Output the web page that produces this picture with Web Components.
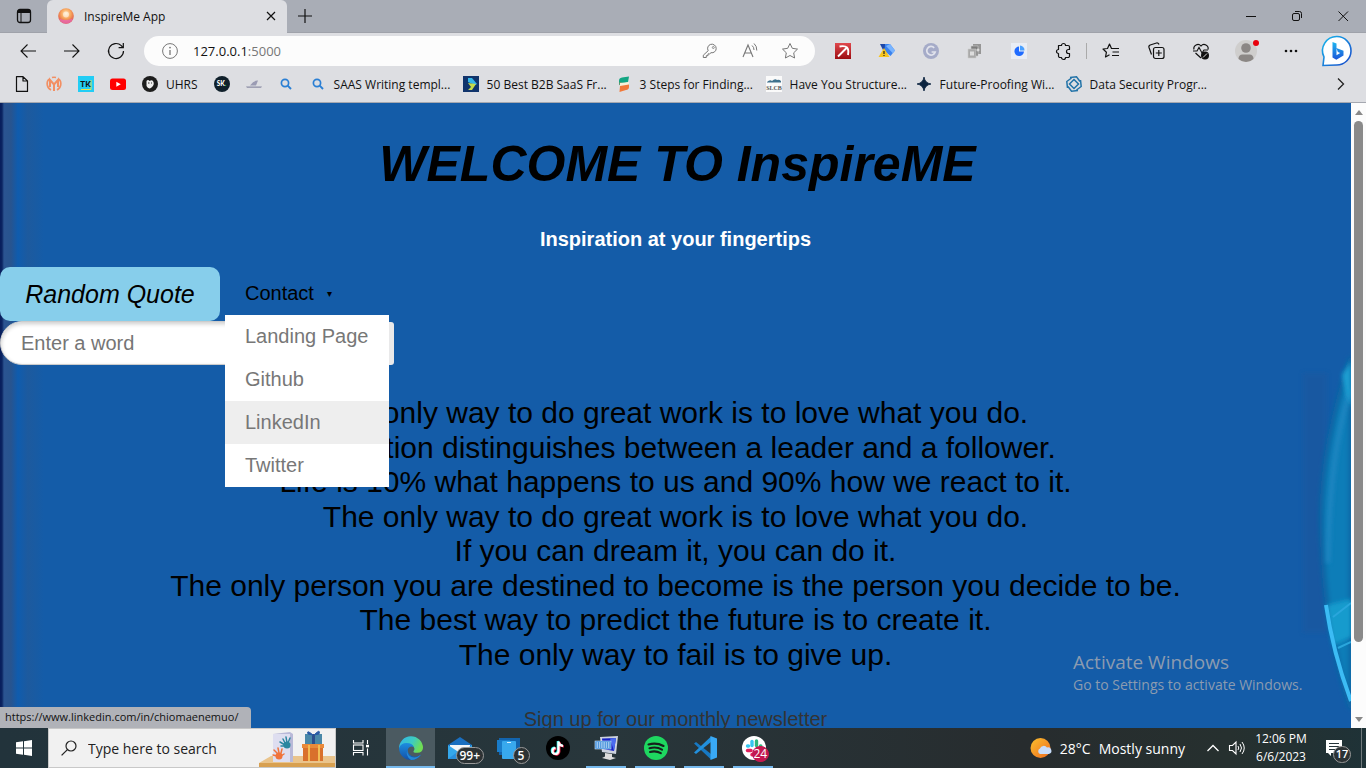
<!DOCTYPE html>
<html lang="en">
<head>
<meta charset="utf-8">
<title>InspireMe App</title>
<style>
html,body{height:100%;margin:0}
body{display:flex;flex-direction:column;overflow:hidden;font-family:"Open Sans","Noto Sans",sans-serif;font-size:12px;color:#111}
</style>
</head>
<body>
<tab-strip></tab-strip>
<browser-toolbar></browser-toolbar>
<bookmarks-bar></bookmarks-bar>
<browser-view>
  <inspire-page></inspire-page>
</browser-view>
<task-bar></task-bar>

<script>
const ICONS = {
  workspace:[16,`<rect x="1.5" y="1.5" width="13" height="13" rx="2.5" fill="none" stroke="#111" stroke-width="1.3"/><path d="M1.5 5V3.5a2 2 0 0 1 2-2h9a2 2 0 0 1 2 2V5z" fill="#111"/><path d="M5 5v9.5" stroke="#111"/>`],
  orb:[16,`<defs><radialGradient id="g" cx=".5" cy=".35" r=".7"><stop offset="0" stop-color="#ffe9b8"/><stop offset=".45" stop-color="#f7a45b"/><stop offset="1" stop-color="#d6403f"/></radialGradient></defs><circle cx="8" cy="8" r="7.8" fill="url(#g)"/><path d="M1 10.500a7.400 7.400 0 0 0 14 0q-7 3-14 0z" fill="#e86ab8" opacity=".75"/><circle cx="8" cy="6.500" r="3" fill="#fff" opacity=".5"/>`],
  close:[16,`<path d="M4 4l8 8M12 4l-8 8" stroke="#111" stroke-width="1.2"/>`],
  plus:[16,`<path d="M8 1v14M1 8h14" stroke="#111" stroke-width="1.2"/>`],
  min:[16,`<path d="M3 8.5h10" stroke="#111"/>`],
  restore:[16,`<rect x="3.500" y="5.500" width="7" height="7" rx="1.500" fill="none" stroke="#111"/><path d="M6 3.500h4.500a2 2 0 0 1 2 2V10" fill="none" stroke="#111"/>`],
  winclose:[16,`<path d="M3.500 3.500l9.500 9.500M13 3.500L3.500 13" stroke="#111"/>`],
  back:[16,`<path d="M16 8H1M7.500 1.500L1 8l6.500 6.500" fill="none" stroke="#111" stroke-width="1.100"/>`],
  forward:[16,`<path d="M0 8h15M8.500 1.500L15 8l-6.500 6.500" fill="none" stroke="#111" stroke-width="1.100"/>`],
  refresh:[18,`<path d="M16.500 9a7.500 7.500 0 1 1-2.200-5.300L16 5.500" fill="none" stroke="#111" stroke-width="1.200"/><path d="M16.300 1v4.700h-4.700" fill="none" stroke="#111" stroke-width="1.200"/>`],
  info:[16,`<circle cx="8" cy="8" r="7.400" fill="none" stroke="#777"/><path d="M8 7v5" stroke="#777" stroke-width="1.300"/><circle cx="8" cy="4.600" r=".9" fill="#777"/>`],
  key:[16,`<path d="M6.200 8.200A4.300 4.300 0 1 1 9 10.200L7.700 11.400H6v1.800H4.300V15H1.300v-2.300z" transform="translate(0 -.5)" fill="none" stroke="#777"/><circle cx="11.300" cy="4.500" r="1" fill="none" stroke="#777" stroke-width=".8"/>`],
  read:[18,`<path d="M2 15L7 3l5 12M3.600 11h6.800" fill="none" stroke="#777" stroke-width="1.100"/><path d="M11 3.500q2 1.500 2 4.500M13 1.500q3 2.500 2.800 7" fill="none" stroke="#777"/>`],
  star:[18,`<path d="M9 1.500l2.300 4.800 5.200.8-3.800 3.700.9 5.200L9 13.500 4.400 16l.9-5.200L1.500 7.100l5.200-.8z" fill="none" stroke="#777" stroke-linejoin="round"/>`],
  pick:[16,`<defs><linearGradient id="g" x2="0" y2="1"><stop stop-color="#e0484d"/><stop offset="1" stop-color="#9c0d12"/></linearGradient></defs><rect width="16" height="16" fill="url(#g)"/><path d="M3 13.500L11.500 5M4.500 3.500q5.500-1 7.500 1t1 7.500" fill="none" stroke="#fff" stroke-width="1.900"/>`],
  filter:[18,`<path d="M2 2h10l-6 8z" fill="#1d47a8"/><path d="M7 2h5l5 6.500-4.500 5.500-6-5z" fill="#3b83ee"/><path d="M12 2l5 6.500-2.200 2.700L8 4z" fill="#79b4ff"/><path d="M6 6l5.500 9H.5z" fill="#f7c51e"/><path d="M6 9v3M6 13v1" stroke="#222" stroke-width="1.200"/>`],
  gram:[16,`<circle cx="8" cy="8" r="8" fill="#a5abc8"/><path d="M11.200 4.800A4.300 4.300 0 1 0 12.200 9H8.600" fill="none" stroke="#e1e3ec" stroke-width="1.700"/>`],
  copies:[16,`<path d="M6 1h8v10H6z" fill="#969696"/><path d="M4 3h7v10H4z" fill="#7d7d7d" stroke="#ccc" stroke-width=".6"/><path d="M1 6h8v9H1z" fill="#a9a9a9" stroke="#ccc" stroke-width=".6"/><path d="M3 8.500h4v4H3z" fill="#ddd"/><path d="M9.500 7h3M11 5.500v3" stroke="#eee"/>`],
  pie:[16,`<rect width="16" height="16" fill="#e9edf5"/><path d="M8 3.500A4.800 4.800 0 1 0 13 8.500H8z" fill="#1f6bff"/><path d="M9 2.500v5h4.500A4.800 4.800 0 0 0 9 2.500z" fill="#4aa0ff"/>`],
  puzzle:[18,`<path d="M4.500 3.500h3a2 2 0 1 1 4 0h2.500a1.500 1.500 0 0 1 1.500 1.500v2.500h-1a1.800 1.800 0 0 0 0 4h1V14a1.500 1.500 0 0 1-1.500 1.500h-2.500a2 2 0 0 1-4 0H6A1.500 1.500 0 0 1 4.500 14v-2.500a2 2 0 1 1 0-4z" fill="none" stroke="#111" stroke-width="1.200" stroke-linejoin="round"/>`],
  favs:[18,`<path d="M9.500 6.500L7.500 2 5.500 6.500 1 7l3.400 3.300-.9 4.700L7.500 12.700M7.500 2l2 4.500h7.500M10.500 10H17M10 13.500h7" fill="none" stroke="#111" stroke-width="1.200" stroke-linejoin="round"/>`],
  collect:[18,`<rect x="6.500" y="5.500" width="10.500" height="11" rx="2" fill="none" stroke="#111" stroke-width="1.200"/><path d="M11.800 8v6M8.800 11h6" stroke="#111" stroke-width="1.200"/><path d="M4.500 12.500L2 5.500A2 2 0 0 1 3.200 3l6.300-2a2 2 0 0 1 2.500 1.500" fill="none" stroke="#111" stroke-width="1.200"/>`],
  heart:[18,`<path d="M2 7.500A4 4 0 0 1 9 4a4 4 0 0 1 7 3.500M3.500 11L9 16" fill="none" stroke="#111" stroke-width="1.200"/><path d="M1 9h4l2-3.500 3 5.500 2-3h4" fill="none" stroke="#111" stroke-width="1.100"/><circle cx="13" cy="13.500" r="4" fill="#111"/><path d="M11 15.500l4-4" stroke="#ddd"/>`],
  person:[22,`<circle cx="11" cy="11" r="11" fill="#cfcecd"/><circle cx="11" cy="8" r="4.800" fill="#8b8785"/><path d="M3.500 19q0-4.500 4-4.500h7q4 0 4 4.500a11 11 0 0 1-15 0z" fill="#8b8785"/>`],
  dots:[16,`<circle cx="3" cy="8" r="1.300" fill="#111"/><circle cx="8" cy="8" r="1.300" fill="#111"/><circle cx="13" cy="8" r="1.300" fill="#111"/>`],
  bing:[32,`<defs><linearGradient id="g" x2="1" y2="1"><stop stop-color="#18b8ec"/><stop offset="1" stop-color="#1b49c9"/></linearGradient><linearGradient id="h" x2="0" y2="1"><stop stop-color="#1fb6f0"/><stop offset="1" stop-color="#1c55d8"/></linearGradient></defs><path d="M16 1.500A14.200 14.200 0 1 1 15.500 30L2 30.500 3 22A14.200 14.200 0 0 1 16 1.500z" fill="#fff" stroke="url(#g)" stroke-width="1.600"/><path d="M11.500 7l4 1.500v11.700l3.700-2.100-2.300-1.200-1.600-3.800 7.200 2.600v4.700l-7.200 4.400-3.800-2.300z" fill="url(#h)"/>`],
  page:[16,`<path d="M3 .6h6.500L14 5v10.400H3zM9.500.6V5H14" transform="translate(-.5 0)" fill="none" stroke="#111" stroke-width="1.200" stroke-linejoin="round"/>`],
  monday:[16,`<path d="M5 14A7 7 0 0 1 3 3M6 1.500a7 7 0 0 1 4 0M13 3a7 7 0 0 1-2 11" fill="none" stroke="#f28f63" stroke-width="1.600"/><path d="M4 11V4l4 4.500L12 4v7M8 8.500V15" fill="none" stroke="#f28f63" stroke-width="2"/>`],
  tk:[16,`<rect width="16" height="16" fill="#22cdf5"/><path d="M3 13.500h10V4" fill="none" stroke="#e8e24a"/><text x="7.500" y="10.500" text-anchor="middle" font-family="Lato,sans-serif" font-weight="900" font-size="8" fill="#111">TK</text>`],
  yt:[16,`<rect y="2.500" width="16" height="11.500" rx="2.500" fill="#f00"/><path d="M6.300 5.700l4.500 2.500-4.500 2.500z" fill="#fff"/>`],
  uhrs:[16,`<circle cx="8" cy="8" r="8" fill="#1d1d1d"/><path d="M4.500 5q1.500-2 3 0 3-2 4 1t-2 5.500-5-1.500z" fill="#eee"/><path d="M6 7h1.500M9 7h1" stroke="#333"/>`],
  sk:[16,`<circle cx="8" cy="8" r="8" fill="#10202b"/><text x="7.600" y="10.300" text-anchor="middle" font-family="Lato,sans-serif" font-weight="900" font-size="6.500" fill="#fff">SK<tspan fill="#2bd576">.</tspan></text>`],
  ship:[16,`<path d="M0 10.500h16l-1 1.200H1z" fill="#8a8ba3"/><path d="M4 9.500Q8 4 12 4.500L10 9.500z" fill="#9a9bb3"/>`],
  search:[16,`<circle cx="7" cy="7" r="3.600" fill="none" stroke="#2a7fd4" stroke-width="1.700"/><path d="M9.700 9.700L13 13" stroke="#2a7fd4" stroke-width="1.900"/>`],
  b2b:[16,`<rect width="16" height="16" fill="#10346c"/><path d="M5 2h4l5 6-2 1-7-3z" fill="#35b6e8"/><path d="M5 7l8 1-4 6H5l3-3z" fill="#c5dc4b"/>`],
  steps:[16,`<path d="M13 .5L12 6 3 9V4.500Q3 2 6 1.500z" fill="#12a583"/><path d="M3.500 6.500L13 8v3q0 2.500-3 3l-6.500 2L4 10z" fill="#f2793a"/><path d="M4 7l9-1v2.500L4 10z" fill="#f8f1d9"/>`],
  slcb:[16,`<rect width="16" height="16" fill="#fafafa"/><path d="M1 6q3-3 5-1 3-3 5-1 2-1 4 1v1.500H1z" fill="#3f718d"/><text x="8" y="14" text-anchor="middle" font-family="Liberation Serif,serif" font-weight="700" font-size="6" fill="#555">SLCB</text>`],
  spark:[16,`<path d="M8 1Q9 7 15 8 9 9 8 15 7 9 1 8 7 7 8 1z" fill="#0c2440" stroke="#0c2440" stroke-width=".8"/>`],
  knot:[16,`<g fill="none" stroke="#2273a8" stroke-width="1.500"><path d="M4 1.500L10.500.800 14 5.500"/><path d="M4 1.500L10.500.800 14 5.500" transform="rotate(90 8 8)"/><path d="M4 1.500L10.500.800 14 5.500" transform="rotate(180 8 8)"/><path d="M4 1.500L10.500.800 14 5.500" transform="rotate(270 8 8)"/><path d="M8 3.500L12.500 8 8 12.500 3.500 8z"/></g>`],
  chevron:[16,`<path d="M5 2.500L10.500 8 5 13.500" fill="none" stroke="#222" stroke-width="1.300"/>`],
  windows:[16,`<path d="M0 2.300L7 1.300v6.200H0zM8 1.200L16 0v7.500H8zM0 8.500h7v6.200l-7-1zM8 8.500h8V16l-8-1.200z" fill="#fff"/>`],
  glass:[16,`<circle cx="10" cy="6" r="5" fill="none" stroke="#222" stroke-width="1.200"/><path d="M6.400 9.600L.6 15.400" stroke="#222" stroke-width="1.300"/>`],
  taskview:[18,`<path d="M1.500 1v3h9.500V1M1.500 16.500v-3h9.500v3" fill="none" stroke="#fff" stroke-width="1.100"/><rect x="1.500" y="6" width="9.500" height="5.500" fill="none" stroke="#fff" stroke-width="1.100"/><path d="M15.500 1v4M15.500 9.500v7" stroke="#fff" stroke-width="1.100"/><rect x="14" y="5.800" width="3" height="2.500" fill="#fff"/>`],
  edge:[24,`<defs><linearGradient id="g" y2=".4"><stop stop-color="#2fb4ee"/><stop offset=".6" stop-color="#3ecbbf"/><stop offset="1" stop-color="#6fdd54"/></linearGradient><linearGradient id="h" x2="0" y2="1"><stop stop-color="#1c8ee0"/><stop offset="1" stop-color="#1450a8"/></linearGradient></defs><path d="M0 12.500A12 12 0 0 1 24 12q-.5 4.500-5.500 4.800-4.500.2-4-1.600Q17 12 13 9.500 6 6 0 12.500z" fill="url(#g)"/><path d="M0 12Q2 7 7.500 7q6 0 7.300 4-3.300-1.500-5.300 1-2 3 1 6.500 4 4 11.500.5A12 12 0 0 1 12 24 12 12 0 0 1 0 12z" fill="url(#h)"/><path d="M8.500 13.500q-1 5.500 4 7.500 5 1.500 9.500-2.500A12 12 0 0 1 12 24Q6 20 8.500 13.500z" fill="#2488d6"/>`],
  mail:[24,`<path d="M0 9L12 1l12 8v14H0z" fill="#1a6fc0"/><path d="M2 9h20v10H2z" fill="#f3f6f8"/><path d="M0 9l12 8 12-8v14H0z" fill="#35a8ec"/><path d="M0 23L12 14l12 9z" fill="#2a90de"/>`],
  phone:[24,`<rect x="2" y="2" width="21" height="17" fill="#1264ae"/><rect y="4" width="13" height="12" fill="#197cca"/><rect x="5" y="5" width="14" height="18" rx="1" fill="#38a9ee"/><path d="M10 6.500h4" stroke="#d7efff"/>`],
  tiktok:[24,`<circle cx="12" cy="12" r="12" fill="#000"/><g fill="none" stroke-width="2.200"><path d="M12.500 5.500v9.500a3 3 0 1 1-3-3M12.500 5.500q.5 4 4.500 4.300" stroke="#25f4ee" transform="translate(-.7 -.5)"/><path d="M12.500 5.500v9.500a3 3 0 1 1-3-3M12.500 5.500q.5 4 4.500 4.300" stroke="#fe2c55" transform="translate(.8 .6)"/><path d="M12.500 5.500v9.500a3 3 0 1 1-3-3M12.500 5.500q.5 4 4.500 4.300" stroke="#fff"/></g>`],
  pc:[24,`<path d="M5 1l18-1-2 18-14-2z" fill="#ccd2de"/><path d="M7 2.500l14-.5-2 13-11-2z" fill="#1722c4"/><path d="M15 2.500l6-.5-2 13z" fill="#4a6bef"/><rect x="0" y="5" width="16" height="8" fill="#3a8bda" stroke="#cfe6fa" stroke-width=".6"/><path d="M1.500 7h13M1.500 9h13M1.500 11h13" stroke="#fff" stroke-width="1.100" stroke-dasharray="1.500 .8"/><path d="M10 17l7 1v3l4 1-6 2-8-2 3-1.500z" fill="#dcdcdc"/>`],
  spotify:[24,`<circle cx="12" cy="12" r="12" fill="#1ed760"/><path d="M4.500 8.500q8-2.300 15 1.500M5.500 12.300q7-2 12.500 1.400M6 16q6-1.600 10.800 1.200" fill="none" stroke="#16201c" stroke-width="2.100" stroke-linecap="round"/>`],
  vscode:[24,`<path d="M1 7.500L3 6l15 12v5.500z" fill="#1779c4"/><path d="M1 16.500L3 18 18 6V.5z" fill="#2290dd"/><path d="M17.500 0L24 2.500v19L17.500 24z" fill="#39a9f5"/>`],
  slack:[24,`<circle cx="12" cy="12" r="12" fill="#fff"/><g stroke-width="3.400" stroke-linecap="round"><path d="M10 5.500v4" stroke="#36c5f0"/><path d="M5.500 10h1" stroke="#36c5f0"/><path d="M14.500 5v4.500" stroke="#2eb67d"/><path d="M18.500 10h.3" stroke="#2eb67d"/><path d="M5.500 14.500H9" stroke="#e01e5a"/><path d="M10 18.500v.3" stroke="#e01e5a"/><path d="M15 14.500h4" stroke="#ecb22e"/></g>`],
  sun:[22,`<defs><linearGradient id="g" x2="1" y2="1"><stop stop-color="#fbc02e"/><stop offset="1" stop-color="#ee6b1f"/></linearGradient></defs><circle cx="10.500" cy="11" r="10" fill="url(#g)"/><path d="M10 17a3 3 0 0 1 0-5.500A4 4 0 0 1 17 10.500a3.300 3.300 0 0 1 2 6.500z" fill="#c8dcfa"/>`],
  up:[14,`<path d="M1.500 10L7 4.500l5.500 5.500" fill="none" stroke="#fff" stroke-width="1.300"/>`],
  speaker:[18,`<path d="M1.500 6.500h3L8 3v12L4.500 11.500h-3z" fill="none" stroke="#fff" stroke-width="1.100"/><path d="M10 7q1.500 2 0 4M12 5q3 4 0 8M14 3q4.500 6 0 12" fill="none" stroke="#fff"/>`],
  notes:[18,`<path d="M1 1h16v13H6v3l-3-3H1z" fill="#fff"/><path d="M4 4.500h10M4 7.500h10M4 10.500h7" stroke="#26343a" stroke-width="1.200"/>`]
};

class UiIcon extends HTMLElement{
  static observedAttributes=['name'];
  constructor(){super();this.attachShadow({mode:'open'});}
  attributeChangedCallback(){
    const [box,art]=ICONS[this.getAttribute('name')];
    this.shadowRoot.innerHTML=`<style>:host{display:inline-flex;flex:none}svg{display:block;overflow:visible}</style><svg width="${box}" height="${box}" viewBox="0 0 ${box} ${box}" aria-hidden="true">${art}</svg>`;
  }
}
customElements.define('ui-icon',UiIcon);

const RESET=`*,:host{box-sizing:border-box}button,input{font:inherit;color:inherit;border:0;background:none;padding:0;margin:0}a{color:inherit;text-decoration:none}`;
function define(name,html,setup){
  const t=document.createElement('template');
  t.innerHTML=html;
  customElements.define(name,class extends HTMLElement{
    constructor(){super();this.attachShadow({mode:'open'}).append(t.content.cloneNode(true));}
    connectedCallback(){if(setup)setup(this);}
  });
}

/* Square button that holds one icon */
define('icon-button',`<style>${RESET}:host{display:flex;flex:none;width:44px;align-items:center;justify-content:center}button{display:flex;position:relative}</style><button><slot></slot></button>`,
  el=>el.shadowRoot.querySelector('button').setAttribute('aria-label',el.getAttribute('label')));

define('tab-strip',`<style>${RESET}
:host{display:flex;flex:none;height:33px;background:#a9adb6;border-bottom:1px solid #9fa2aa}
icon-button{width:47px}
.tab{display:flex;align-items:center;gap:10px;width:240px;height:33px;padding:0 0 1px 11px;background:#dddee2;border-radius:6px 6px 0 0}
.tab span{flex:1}
.tab icon-button{width:32px}
.new{width:36px}.gap{flex:1}.win{width:46px}
</style>
<icon-button label="Workspaces"><ui-icon name="workspace"></ui-icon></icon-button>
<div class="tab"><ui-icon name="orb"></ui-icon><span>InspireMe App</span><icon-button label="Close tab"><ui-icon name="close"></ui-icon></icon-button></div>
<icon-button class="new" label="New tab"><ui-icon name="plus"></ui-icon></icon-button>
<div class="gap"></div>
<icon-button class="win" label="Minimise"><ui-icon name="min"></ui-icon></icon-button>
<icon-button class="win" label="Restore"><ui-icon name="restore"></ui-icon></icon-button>
<icon-button class="win" label="Close"><ui-icon name="winclose"></ui-icon></icon-button>`);

define('browser-toolbar',`<style>${RESET}
:host{display:flex;flex:none;height:36px;padding:0 5px 0 6px;background:#dddee2}
.address{display:flex;flex:1;align-items:center;height:30px;margin:3px 6px;border-radius:15px;background:#fcfcfc;padding:0 5px 0 18px;gap:15px}
.url{flex:1;display:flex;font-size:13px;color:#777}
.url b{font-weight:400;color:#111}
.tools{display:flex}.tools icon-button{width:40px}
.app{width:45px}.bing{width:48px}
.rule{width:1px;height:16px;margin:10px 1px;background:#aaa}
.dot{position:absolute;right:-2px;top:0;width:6px;height:6px;border-radius:3px;background:#e8000c}
</style>
<icon-button label="Back"><ui-icon name="back"></ui-icon></icon-button>
<icon-button label="Forward"><ui-icon name="forward"></ui-icon></icon-button>
<icon-button label="Refresh"><ui-icon name="refresh"></ui-icon></icon-button>
<div class="address"><ui-icon name="info"></ui-icon><div class="url"><b>127.0.0.1</b>:5000</div>
<div class="tools"><icon-button label="Passwords"><ui-icon name="key"></ui-icon></icon-button><icon-button label="Read aloud"><ui-icon name="read"></ui-icon></icon-button><icon-button label="Favourite"><ui-icon name="star"></ui-icon></icon-button></div></div>
<icon-button label="Pickaxe"><ui-icon name="pick"></ui-icon></icon-button>
<icon-button label="Filter"><ui-icon name="filter"></ui-icon></icon-button>
<icon-button label="Grammar"><ui-icon name="gram"></ui-icon></icon-button>
<icon-button label="Copies"><ui-icon name="copies"></ui-icon></icon-button>
<icon-button label="Similar sites"><ui-icon name="pie"></ui-icon></icon-button>
<icon-button label="Extensions"><ui-icon name="puzzle"></ui-icon></icon-button>
<div class="rule"></div>
<icon-button class="app" label="Favourites"><ui-icon name="favs"></ui-icon></icon-button>
<icon-button class="app" label="Collections"><ui-icon name="collect"></ui-icon></icon-button>
<icon-button class="app" label="Essentials"><ui-icon name="heart"></ui-icon></icon-button>
<icon-button class="app" label="Profile"><ui-icon name="person"></ui-icon><span class="dot"></span></icon-button>
<icon-button class="app" label="More"><ui-icon name="dots"></ui-icon></icon-button>
<icon-button class="bing" label="Bing"><ui-icon name="bing"></ui-icon></icon-button>`);

define('bookmark-item',`<style>${RESET}
:host{display:flex;flex:none}
a{display:flex;align-items:center;gap:8px;padding:0 8px;white-space:nowrap}
</style><a href="#"><ui-icon></ui-icon><slot></slot></a>`,
el=>{
  el.shadowRoot.querySelector('ui-icon').setAttribute('name',el.getAttribute('icon'));
  if(el.hasAttribute('label'))el.shadowRoot.querySelector('a').setAttribute('aria-label',el.getAttribute('label'));
});

define('bookmarks-bar',`<style>${RESET}
:host{display:flex;flex:none;height:34px;padding:0 3px 3px 6px;background:#dddee2;border-bottom:1px solid #a5a8b0}
.page{width:150px}
.wide{width:153px}
.gap{flex:1}
</style>
<bookmark-item icon="page" label="Page"></bookmark-item><bookmark-item icon="monday" label="Boards"></bookmark-item><bookmark-item icon="tk" label="TK"></bookmark-item><bookmark-item icon="yt" label="YouTube"></bookmark-item><bookmark-item icon="uhrs"><span>UHRS</span></bookmark-item><bookmark-item icon="sk" label="SK"></bookmark-item><bookmark-item icon="ship" label="Ship"></bookmark-item><bookmark-item icon="search" label="Search"></bookmark-item><bookmark-item class="wide" icon="search"><span>SAAS Writing templ...</span></bookmark-item><bookmark-item class="wide" icon="b2b"><span>50 Best B2B SaaS Fr...</span></bookmark-item><bookmark-item class="page" icon="steps"><span>3 Steps for Finding...</span></bookmark-item><bookmark-item class="page" icon="slcb"><span>Have You Structure...</span></bookmark-item><bookmark-item class="page" icon="spark"><span>Future-Proofing Wi...</span></bookmark-item><bookmark-item class="page" icon="knot"><span>Data Security Progr...</span></bookmark-item>
<div class="gap"></div><icon-button label="More bookmarks"><ui-icon name="chevron"></ui-icon></icon-button>`);

define('scroll-rail',`<style>
:host{display:flex;flex-direction:column;flex:none;width:15px;background:#fcfcfc;align-items:center}
.up,.down{border:4px solid transparent;width:0;height:0}
.up{border-top:0;border-bottom:5px solid #888;margin:7px 0 6px}
.thumb{flex:520;width:9px;border-radius:5px;background:#8a8a8a}
.rest{flex:75}
.down{border-bottom:0;border-top:5px solid #888;margin-bottom:6px}
</style><i class="up"></i><i class="thumb"></i><i class="rest"></i><i class="down"></i>`);

define('browser-view',`<style>
:host{display:flex;flex:1;min-height:0;position:relative;overflow:hidden}
::slotted(*){flex:1}
.status{position:absolute;left:0;bottom:0;height:21px;line-height:20px;padding:0 13px 0 5px;background:#b0b2b8;border-radius:0 4px 0 0;font-size:11px;color:#111}
.mark{position:absolute;right:57px;bottom:33px;width:236px;color:#8b9bb0;font-size:14px;line-height:20px;white-space:nowrap}
.mark strong{display:block;font-weight:400;font-size:19px;line-height:25px}
</style><slot></slot><scroll-rail></scroll-rail>
<div class="status">https://www.linkedin.com/in/chiomaenemuo/</div>
<div class="mark"><strong>Activate Windows</strong>Go to Settings to activate Windows.</div>`);

define('contact-menu',`<style>${RESET}
:host{display:block;position:relative}
button{display:flex;align-items:center;gap:13px;height:48px;padding:4px 20px 0;font-size:20px}
button i{font:normal 10px "DejaVu Sans",sans-serif}
ul{position:absolute;z-index:2;left:0;top:48px;min-width:164px;margin:0;padding:0;list-style:none;background:#fff;color:#777;font-size:20px}
a{display:block;line-height:43px;padding:0 20px;white-space:nowrap}
.on{background:#eee}
</style>
<button aria-haspopup="true" aria-expanded="true">Contact <i>▾</i></button>
<ul><li><a href="#">Landing Page</a></li><li><a href="#">Github</a></li><li><a class="on" href="https://www.linkedin.com/in/chiomaenemuo/">LinkedIn</a></li><li><a href="#">Twitter</a></li></ul>`);

define('quote-search',`<style>${RESET}
:host{display:block}
form{display:flex;width:394px;height:44px}
input{flex:1;min-width:0;height:44px;padding:0 20px;border:1px solid #ccc;border-radius:22px 0 0 22px;background:#fff;box-shadow:inset 0 2px 4px #0003;font-size:20px}
input::placeholder{color:#757575;opacity:1}
button{width:60px;background:#e9e9ea;border-radius:0 3px 3px 0;margin-top:1px}
</style><form><input type="text" aria-label="Word" placeholder="Enter a word"><button type="button" aria-label="Search"></button></form>`);

define('inspire-page',`<style>${RESET}
:host{display:block;position:relative;overflow:hidden;min-width:0;font-family:"Liberation Sans",Arial,sans-serif;color:#000;background:linear-gradient(90deg,#071d5c 0,#0b2461 2px,#2b5491 4px,#27548f 11px,#0f5cae 18px,#1d5a9e 28px,#145ca8 44px) #145ca8}
.art{position:absolute;right:0;top:240px;width:60px;height:385px}
header{text-align:center}
h1{margin:0;padding:33px 0 0 4px;font-size:50px;line-height:57px;font-style:italic}
h2{margin:35px 0 0;font-size:20px;line-height:23px;color:#fff}
nav{display:flex;gap:5px;margin-top:16px;position:relative;z-index:1}
.random{min-width:220px;height:54px;padding:0 25px;border-radius:10px;background:#87ceeb;font-size:25px;font-style:italic}
.quotes{display:grid;grid-auto-rows:1fr;align-items:center;height:276px;margin:31px 0 0;padding:0;list-style:none;text-align:center;font-size:30px;line-height:34px}
.news{margin:36px 0 0;text-align:center;font-size:20px;line-height:23px;color:#333}
</style>
<svg class="art" viewBox="0 0 60 385" aria-hidden="true"><defs><filter id="s" x="-50%" width="200%"><feGaussianBlur stdDeviation="2"/></filter></defs>
<path d="M12 30h24v260H12z" fill="#1c579c" opacity=".5" filter="url(#s)"/>
<path d="M60 15Q28 110 31 190 34 290 60 365z" fill="#0f7db8" stroke="#0868a6" stroke-width="5" filter="url(#s)"/>
<path d="M60 45Q38 110 37 220" fill="none" stroke="#2c8cc8" stroke-width="4" opacity=".7" filter="url(#s)"/>
<path d="M60 18l-9 14 4 20 5 12z" fill="#1a9fd2" filter="url(#s)"/>
<path d="M36 262l24-6v38l-18 8z" fill="#139bcd" filter="url(#s)"/>
<path d="M35 262Q42 310 60 358" fill="none" stroke="#3cbcf5" stroke-width="4"/><path d="M42 274l18-14M47 305l13-6" stroke="#2aa6dc" stroke-width="2"/></svg>
<header><h1>WELCOME TO InspireME</h1><h2>Inspiration at your fingertips</h2></header>
<nav><button class="random">Random Quote</button><contact-menu></contact-menu></nav>
<quote-search></quote-search>
<ul class="quotes"><li>The only way to do great work is to love what you do.</li><li>Innovation distinguishes between a leader and a follower.</li><li>Life is 10% what happens to us and 90% how we react to it.</li><li>The only way to do great work is to love what you do.</li><li>If you can dream it, you can do it.</li><li>The only person you are destined to become is the person you decide to be.</li><li>The best way to predict the future is to create it.</li><li>The only way to fail is to give up.</li></ul>
<p class="news">Sign up for our monthly newsletter</p>`);

/* Taskbar button: icon, optional badge, optional underline when running */
define('task-button',`<style>${RESET}
:host{display:flex;flex:none;width:49px;justify-content:center;position:relative}
:host([running])::after{content:"";position:absolute;left:4px;right:5px;bottom:0;height:2px;background:#76b9ed}
:host([active]){background:#4b5a61}
:host([active])::after{left:0;right:0}
button{display:flex;align-items:center;position:relative}
::slotted(*){position:absolute;left:16px;top:19px;min-width:17px;height:17px;padding:0 4px;border:1px solid #999;border-radius:9px;background:#2c3234;color:#fff;font-weight:600;font-size:12px;line-height:15px}
::slotted(.wide){left:8px;padding:0 3px}
::slotted(.red){left:10px;top:18px;height:16px;min-width:16px;padding:0 1px;background:#c2184f;border-color:#c2184f;font-weight:400;line-height:14px}
</style><button><ui-icon></ui-icon><slot></slot></button>`,
el=>{
  el.shadowRoot.querySelector('ui-icon').setAttribute('name',el.getAttribute('icon'));
  el.shadowRoot.querySelector('button').setAttribute('aria-label',el.getAttribute('icon'));
});

define('task-bar',`<style>${RESET}
:host{display:flex;flex:none;height:40px;background:linear-gradient(90deg,#22333b,#28363b 45%,#272c2e 75%,#26302f 90%,#1f3237);color:#fff}
.start{width:48px}
.find{display:flex;align-items:center;gap:11px;width:288px;padding-left:12px;background:#f1f1f1;border:1px solid #c8c8c8;color:#222}
.find input{flex:1;min-width:0;font-size:14px}
.find input::placeholder{color:#222;opacity:1}
.find svg{flex:none;align-self:flex-end}
.view{width:50px}
.gap{flex:1}
.weather{display:flex;align-items:center;gap:8px;margin-right:16px;font-size:14px;white-space:nowrap}
.tray{width:24px}
time{width:64px;margin-right:1px;text-align:center;font-size:12px;line-height:18px;padding-top:2px;white-space:nowrap}
.note{width:40px;margin-right:7px}
.count{position:absolute;left:8px;top:7px;width:18px;height:17px;border:1px solid #999;border-radius:9px;background:#2c3234;font-size:11px;font-weight:600;line-height:14px;text-align:center}
.peek{width:5px;border-left:1px solid #70797c}
</style>
<icon-button class="start" label="Start"><ui-icon name="windows"></ui-icon></icon-button>
<label class="find"><ui-icon name="glass"></ui-icon><input type="search" aria-label="Search" placeholder="Type here to search">
<svg width="76" height="38" viewBox="0 0 76 38" aria-hidden="true"><path d="M0 34L12 27H76v7z" fill="#eac48c"/><path d="M0 34h76v4H0z" fill="#d8a050"/><path d="M14 5l17-2 3 2v28H14z" fill="#b9b9d8"/><path d="M14 5h17v28H14z" fill="#dedef0"/><g stroke-linecap="round" fill="none" stroke-width="1.500"><path d="M26 16l-5-3M26 14l-2-4M28 14l-1-6M29 14l2-5M26 17h-4" stroke="#2b86a0"/><path d="M19 25l-4-4M20 24l-1-5M22 24l1-4M18 27l-4-1M22 27l3-2" stroke="#f0733a"/></g><circle cx="28" cy="16" r="3.500" fill="#2b86a0"/><circle cx="20" cy="27" r="3.500" fill="#f0733a"/><path d="M46 5h17v14H46z" fill="#4a88a8"/><path d="M53 5h3v14h-3z" fill="#2d4f8d"/><path d="M54 6q-7-6-5-1zM55 6q7-7 5-1z" fill="#2a5ca5" stroke="#2a5ca5"/><path d="M44 18h20v14H44z" fill="#d9702c"/><path d="M43 15h22v4H43z" fill="#ea8a3a"/><path d="M49 16h2v16h-2zM59 16h2v16h-2z" fill="#f3bc53"/></svg></label>
<icon-button class="view" label="Task view"><ui-icon name="taskview"></ui-icon></icon-button>
<task-button icon="edge" running active></task-button>
<task-button icon="mail"><span class="wide">99+</span></task-button>
<task-button icon="phone"><span>5</span></task-button>
<task-button icon="tiktok"></task-button>
<task-button icon="pc" running></task-button>
<task-button icon="spotify" running></task-button>
<task-button icon="vscode" running></task-button>
<task-button icon="slack" running><span class="red">24</span></task-button>
<div class="gap"></div>
<div class="weather"><ui-icon name="sun"></ui-icon><span>28°C</span><span>Mostly sunny</span></div>
<icon-button class="tray" label="Hidden icons"><ui-icon name="up"></ui-icon></icon-button>
<icon-button class="tray" label="Volume"><ui-icon name="speaker"></ui-icon></icon-button>
<time>12:06 PM<br>6/6/2023</time>
<icon-button class="note" label="Notifications"><ui-icon name="notes"></ui-icon><span class="count">17</span></icon-button>
<div class="peek"></div>`);
</script>
</body>
</html>
